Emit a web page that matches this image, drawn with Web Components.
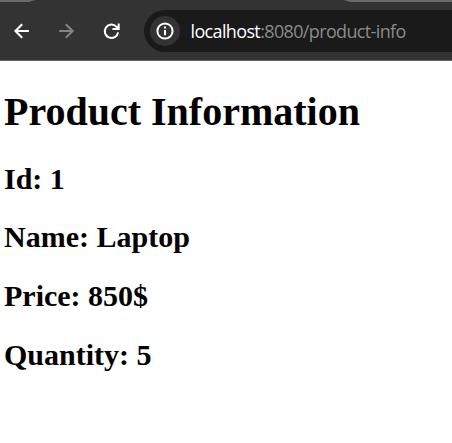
<!DOCTYPE html>
<html lang="en">
<head>
<meta charset="utf-8">
<title>Product Information</title>
<style>
html,body{margin:0;height:100%;overflow:hidden;background:#fff}
</style>
</head>
<body>
<browser-window>
  <browser-toolbar slot="toolbar">
    <nav-icon slot="nav" kind="back"></nav-icon>
    <nav-icon slot="nav" kind="forward"></nav-icon>
    <nav-icon slot="nav" kind="reload"></nav-icon>
    <address-bar><span slot="host">localhost</span><span slot="path">:8080/product-info</span></address-bar>
  </browser-toolbar>
  <product-info>
    <span slot="title">Product Information</span>
    <product-field>Id: 1</product-field>
    <product-field>Name: Laptop</product-field>
    <product-field>Price: 850$</product-field>
    <product-field>Quantity: 5</product-field>
  </product-info>
</browser-window>
<script>
function define(name, html) {
  customElements.define(name, class extends HTMLElement {
    constructor() {
      super();
      this.attachShadow({mode: 'open'}).innerHTML = html;
    }
  });
}

define('browser-window', `
<style>:host{display:flex;flex-direction:column;height:100%;background:#fff}</style>
<slot name="toolbar"></slot><slot></slot>`);

define('browser-toolbar', `
<style>
:host{display:block;height:61px;box-sizing:border-box;background:#333;border-bottom:1px solid #686868;flex:none}
.tabs{display:flex;justify-content:space-between;height:2px}
.tabs svg{display:block}
.row{display:flex;align-items:center;height:58px}
.nav{display:flex;gap:21px;padding:0 20px 0 10px}
</style>
<div class="tabs">
<svg width="36" height="2"><path d="M0 0H36Q32 .3 29 2H0Z" fill="#6b6b6b"/></svg>
<svg width="109" height="2"><path d="M0 0H109V2H7Q4 .3 0 0Z" fill="#6b6b6b"/></svg>
</div>
<div class="row"><div class="nav"><slot name="nav"></slot></div><slot></slot></div>`);

const icons = {
  back: '<path d="M17 12H3.2M10.3 5.2L3.5 12l6.800 6.800" transform="translate(1.900 0)"/>',
  forward: '<path d="M4 12H17.800M10.700 5.200L17.500 12l-6.800 6.800" transform="translate(.1 0)"/>',
  reload: '<path d="M18.100 13.300A6.700 6.700 0 1 1 16.500 7.800L18.300 9.600M18.700 4.500V10H12.500"/>'
};
customElements.define('nav-icon', class extends HTMLElement {
  constructor() {
    super();
    const kind = this.getAttribute('kind');
    this.attachShadow({mode: 'open'}).innerHTML = `
<style>:host{display:block;width:24px;height:24px;color:${kind === 'forward' ? '#858585' : '#fff'}}svg{display:block}</style>
<svg width="24" height="24" viewBox="0 0 24 24" fill="none" stroke="currentColor" stroke-width="2">${icons[kind]}</svg>`;
  }
});

define('address-bar', `
<style>
:host{display:flex;align-items:center;flex:1;height:42px;box-sizing:border-box;padding-left:6px;background:#1a1a1a;border-radius:21px 0 0 21px;font:18px/24px "Open Sans",sans-serif;white-space:nowrap}
.info{width:30px;height:30px;border-radius:50%;background:#333;margin-right:10.500px;flex:none}
.info svg{display:block}
.url{color:#8b8b8b;letter-spacing:-.640px}
.host{color:#fff}
</style>
<div class="info"><svg width="30" height="30" fill="none" stroke="#fff" stroke-width="2"><circle cx="15" cy="15" r="7.600"/><path d="M15 14V19.200M15 10.600V12.600"/></svg></div>
<div class="url"><span class="host"><slot name="host"></slot></span><slot name="path"></slot></div>`);

define('product-info', `
<style>
:host{display:block;padding:28px 0 0 4px;color:#000;font-family:"Liberation Serif","Times New Roman",serif}
h1{margin:0 0 26.600px;font-size:40px;line-height:46px;font-weight:bold;white-space:nowrap}
</style>
<h1><slot name="title"></slot></h1><slot></slot>`);

define('product-field', `
<style>
:host{display:block;margin-bottom:24.670px}
h2{margin:0;font-size:30px;line-height:34px;font-weight:bold;white-space:nowrap}
</style>
<h2><slot></slot></h2>`);
</script>
</body>
</html>
